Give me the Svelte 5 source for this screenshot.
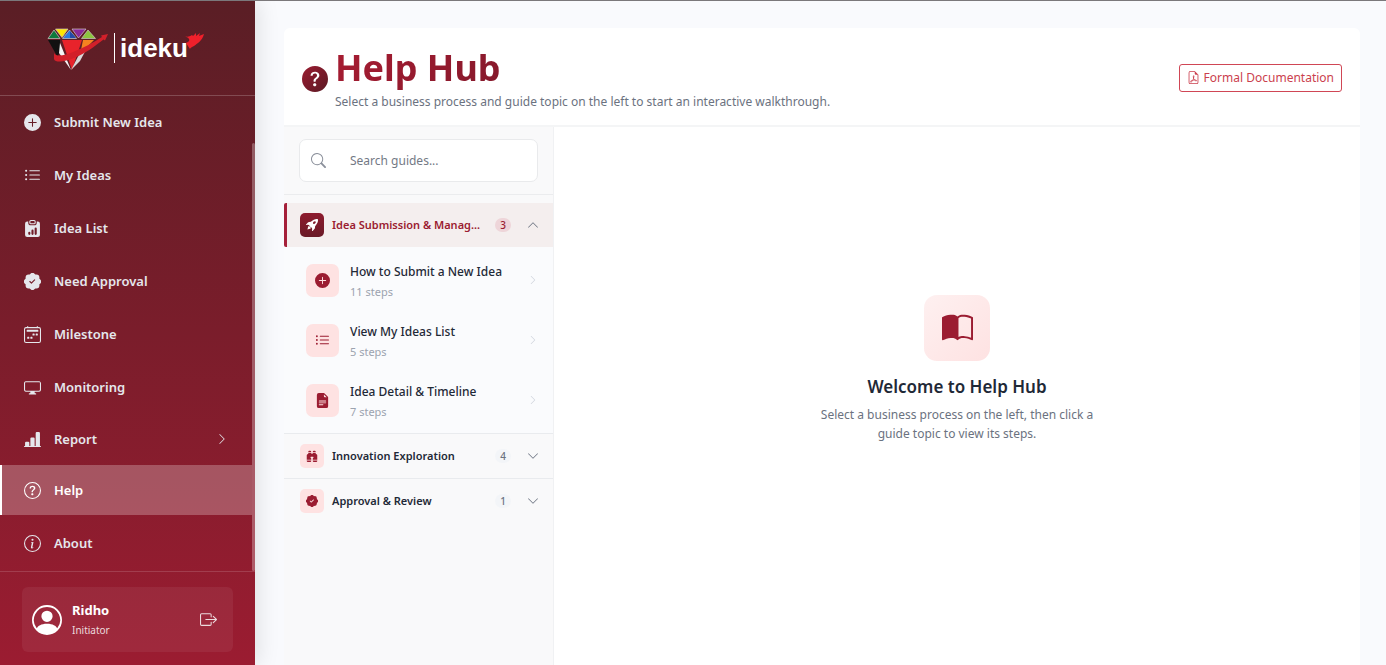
<script>
  const icons = {
    plus: 'M16 8A8 8 0 1 1 0 8a8 8 0 0 1 16 0M8.5 4.5a.5.5 0 0 0-1 0v3h-3a.5.5 0 0 0 0 1h3v3a.5.5 0 0 0 1 0v-3h3a.5.5 0 0 0 0-1h-3z',
    list: 'M5 11.5a.5.5 0 0 1 .5-.5h9a.5.5 0 0 1 0 1h-9a.5.5 0 0 1-.5-.5m0-4a.5.5 0 0 1 .5-.5h9a.5.5 0 0 1 0 1h-9a.5.5 0 0 1-.5-.5m0-4a.5.5 0 0 1 .5-.5h9a.5.5 0 0 1 0 1h-9a.5.5 0 0 1-.5-.5m-3 1a1 1 0 1 0 0-2 1 1 0 0 0 0 2m0 4a1 1 0 1 0 0-2 1 1 0 0 0 0 2m0 4a1 1 0 1 0 0-2 1 1 0 0 0 0 2',
    clipboard: 'M6.5 0A1.5 1.5 0 0 0 5 1.5v1A1.5 1.5 0 0 0 6.5 4h3A1.5 1.5 0 0 0 11 2.5v-1A1.5 1.5 0 0 0 9.5 0zm3 1a.5.5 0 0 1 .5.5v1a.5.5 0 0 1-.5.5h-3a.5.5 0 0 1-.5-.5v-1a.5.5 0 0 1 .5-.5zM4 1.5H3a2 2 0 0 0-2 2V14a2 2 0 0 0 2 2h10a2 2 0 0 0 2-2V3.5a2 2 0 0 0-2-2h-1v1A2.5 2.5 0 0 1 9.5 5h-3A2.5 2.5 0 0 1 4 2.5zM10 8a1 1 0 1 1 2 0v5a1 1 0 1 1-2 0zm-6 4a1 1 0 1 1 2 0v1a1 1 0 1 1-2 0zm4-3a1 1 0 0 1 1 1v3a1 1 0 1 1-2 0v-3a1 1 0 0 1 1-1',
    patch: 'M10.067.87a2.89 2.89 0 0 0-4.134 0l-.622.638-.89-.011a2.89 2.89 0 0 0-2.924 2.924l.01.89-.636.622a2.89 2.89 0 0 0 0 4.134l.637.622-.011.89a2.89 2.89 0 0 0 2.924 2.924l.89-.01.622.636a2.89 2.89 0 0 0 4.134 0l.622-.637.89.011a2.89 2.89 0 0 0 2.924-2.924l-.01-.89.636-.622a2.89 2.89 0 0 0 0-4.134l-.637-.622.011-.89a2.89 2.89 0 0 0-2.924-2.924l-.89.01zm.287 5.984-3 3a.5.5 0 0 1-.708 0l-1.5-1.5a.5.5 0 1 1 .708-.708L7 8.793l2.646-2.647a.5.5 0 0 1 .708.708',
    calendar: 'M3.5 0a.5.5 0 0 1 .5.5V1h8V.5a.5.5 0 0 1 1 0V1h1a2 2 0 0 1 2 2v11a2 2 0 0 1-2 2H2a2 2 0 0 1-2-2V3a2 2 0 0 1 2-2h1V.5a.5.5 0 0 1 .5-.5M2 2a1 1 0 0 0-1 1v11a1 1 0 0 0 1 1h12a1 1 0 0 0 1-1V3a1 1 0 0 0-1-1zM2.5 4a.5.5 0 0 1 .5-.5h10a.5.5 0 0 1 .5.5v1a.5.5 0 0 1-.5.5H3a.5.5 0 0 1-.5-.5zM11 7.5a.5.5 0 0 1 .5-.5h1a.5.5 0 0 1 .5.5v1a.5.5 0 0 1-.5.5h-1a.5.5 0 0 1-.5-.5zm-3 0a.5.5 0 0 1 .5-.5h1a.5.5 0 0 1 .5.5v1a.5.5 0 0 1-.5.5h-1a.5.5 0 0 1-.5-.5zm-5 3a.5.5 0 0 1 .5-.5h1a.5.5 0 0 1 .5.5v1a.5.5 0 0 1-.5.5h-1a.5.5 0 0 1-.5-.5zm3 0a.5.5 0 0 1 .5-.5h1a.5.5 0 0 1 .5.5v1a.5.5 0 0 1-.5.5h-1a.5.5 0 0 1-.5-.5z',
    display: 'M0 4s0-2 2-2h12s2 0 2 2v6s0 2-2 2h-4q0 1 .25 1.5H11a.5.5 0 0 1 0 1H5a.5.5 0 0 1 0-1h.75Q6 13 6 12H2s-2 0-2-2zm1.398-.855a.76.76 0 0 0-.254.302A1.5 1.5 0 0 0 1 4.01V10c0 .325.078.502.145.602q.105.156.302.254a1.5 1.5 0 0 0 .538.143L2.01 11H14c.325 0 .502-.078.602-.145a.76.76 0 0 0 .254-.302 1.5 1.5 0 0 0 .143-.538L15 9.99V4c0-.325-.078-.502-.145-.602a.76.76 0 0 0-.302-.254A1.5 1.5 0 0 0 13.99 3H2c-.325 0-.502.078-.602.145',
    chart: 'M11 2a1 1 0 0 1 1-1h2a1 1 0 0 1 1 1v12h.5a.5.5 0 0 1 0 1H.5a.5.5 0 0 1 0-1H1v-3a1 1 0 0 1 1-1h2a1 1 0 0 1 1 1v3h1V7a1 1 0 0 1 1-1h2a1 1 0 0 1 1 1v7h1z',
    question: 'M8 15A7 7 0 1 1 8 1a7 7 0 0 1 0 14m0 1A8 8 0 1 0 8 0a8 8 0 0 0 0 16M5.255 5.786a.237.237 0 0 0 .241.247h.825c.138 0 .248-.113.266-.25.09-.656.54-1.134 1.342-1.134.686 0 1.314.343 1.314 1.168 0 .635-.374.927-.965 1.371-.673.489-1.206 1.06-1.168 1.987l.003.217a.25.25 0 0 0 .25.246h.811a.25.25 0 0 0 .25-.25v-.105c0-.718.273-.927 1.01-1.486.609-.463 1.244-.977 1.244-2.056 0-1.511-1.276-2.241-2.673-2.241-1.267 0-2.655.59-2.75 2.286m1.557 5.763c0 .533.425.927 1.01.927.609 0 1.028-.394 1.028-.927 0-.552-.42-.94-1.029-.94-.584 0-1.009.388-1.009.94',
    questionFill: 'M16 8A8 8 0 1 1 0 8a8 8 0 0 1 16 0M5.496 6.033h.825c.138 0 .248-.113.266-.25.09-.656.54-1.134 1.342-1.134.686 0 1.314.343 1.314 1.168 0 .635-.374.927-.965 1.371-.673.489-1.206 1.06-1.168 1.987l.003.217a.25.25 0 0 0 .25.246h.811a.25.25 0 0 0 .25-.25v-.105c0-.718.273-.927 1.01-1.486.609-.463 1.244-.977 1.244-2.056 0-1.511-1.276-2.241-2.673-2.241-1.267 0-2.655.59-2.75 2.286a.237.237 0 0 0 .241.247m2.325 6.443c.61 0 1.029-.394 1.029-.927 0-.552-.42-.94-1.029-.94-.584 0-1.009.388-1.009.94 0 .533.425.927 1.01.927z',
    info: 'M8 15A7 7 0 1 1 8 1a7 7 0 0 1 0 14m0 1A8 8 0 1 0 8 0a8 8 0 0 0 0 16m.93-9.412-2.29.287-.082.38.45.083c.294.07.352.176.288.469l-.738 3.468c-.194.897.105 1.319.808 1.319.545 0 1.178-.252 1.465-.598l.088-.416c-.2.176-.492.246-.686.246-.275 0-.375-.193-.304-.533zM9 4.5a1 1 0 1 1-2 0 1 1 0 0 1 2 0',
    logout: 'M10 12.5a.5.5 0 0 1-.5.5h-8a.5.5 0 0 1-.5-.5v-9a.5.5 0 0 1 .5-.5h8a.5.5 0 0 1 .5.5v2a.5.5 0 0 0 1 0v-2A1.5 1.5 0 0 0 9.5 2h-8A1.5 1.5 0 0 0 0 3.5v9A1.5 1.5 0 0 0 1.5 14h8a1.5 1.5 0 0 0 1.5-1.5v-2a.5.5 0 0 0-1 0zM15.854 8.354a.5.5 0 0 0 0-.708l-3-3a.5.5 0 0 0-.708.708L14.293 7.5H5.5a.5.5 0 0 0 0 1h8.793l-2.147 2.146a.5.5 0 0 0 .708.708z',
    person: 'M11 6a3 3 0 1 1-6 0 3 3 0 0 1 6 0M0 8a8 8 0 1 1 16 0A8 8 0 0 1 0 8m8-7a7 7 0 0 0-5.468 11.37C3.242 11.226 4.805 10 8 10s4.757 1.225 5.468 2.37A7 7 0 0 0 8 1',
    search: 'M11.742 10.344a6.5 6.5 0 1 0-1.397 1.398h-.001q.044.06.098.115l3.85 3.85a1 1 0 0 0 1.415-1.414l-3.85-3.85a1 1 0 0 0-.115-.1zM12 6.5a5.5 5.5 0 1 1-11 0 5.5 5.5 0 0 1 11 0',
    down: 'M1.646 4.646a.5.5 0 0 1 .708 0L8 10.293l5.646-5.647a.5.5 0 0 1 .708.708l-6 6a.5.5 0 0 1-.708 0l-6-6a.5.5 0 0 1 0-.708',
    up: 'M7.646 4.646a.5.5 0 0 1 .708 0l6 6a.5.5 0 0 1-.708.708L8 5.707l-5.646 5.647a.5.5 0 0 1-.708-.708z',
    right: 'M4.646 1.646a.5.5 0 0 1 .708 0l6 6a.5.5 0 0 1 0 .708l-6 6a.5.5 0 0 1-.708-.708L10.293 8 4.646 2.354a.5.5 0 0 1 0-.708',
    rocket: 'M12.17 9.53c2.307-2.592 3.278-4.684 3.641-6.218.21-.887.214-1.58.16-2.065a3.6 3.6 0 0 0-.108-.563 2 2 0 0 0-.078-.23V.453c-.073-.164-.168-.234-.352-.295a2 2 0 0 0-.16-.045 4 4 0 0 0-.57-.093c-.49-.044-1.19-.03-2.08.188-1.536.374-3.618 1.343-6.161 3.604l-2.4.238h-.006a2.55 2.55 0 0 0-1.524.734L.15 7.17a.512.512 0 0 0 .433.868l1.896-.271c.28-.04.592.013.955.132.232.076.437.16.655.248l.203.083c.196.816.66 1.58 1.275 2.195.613.614 1.376 1.08 2.191 1.277l.082.202c.089.218.173.424.249.657.118.363.172.676.132.956l-.271 1.9a.512.512 0 0 0 .867.433l2.382-2.386c.41-.41.668-.949.732-1.526zm.11-3.699c-.797.8-1.93.961-2.528.362-.598-.6-.436-1.733.361-2.532.798-.799 1.93-.96 2.528-.361s.437 1.732-.36 2.531ZM5.205 10.787a7.6 7.6 0 0 0 1.804 1.352c-1.118 1.007-4.929 2.028-5.054 1.903-.126-.127.737-4.189 1.839-5.18.346.69.837 1.35 1.411 1.925',
    binoculars: 'M4.5 1A1.5 1.5 0 0 0 3 2.5V3h4v-.5A1.5 1.5 0 0 0 5.5 1zM7 4v1h2V4h4v.882a.5.5 0 0 0 .276.447l.895.447A1.5 1.5 0 0 1 15 7.118V13H9v-1.5a.5.5 0 0 1 .146-.354l.854-.853V9.5a.5.5 0 0 0-.5-.5h-3a.5.5 0 0 0-.5.5v.793l.854.853A.5.5 0 0 1 7 11.5V13H1V7.118a1.5 1.5 0 0 1 .83-1.342l.894-.447A.5.5 0 0 0 3 4.882V4zM1 14v.5A1.5 1.5 0 0 0 2.5 16h3A1.5 1.5 0 0 0 7 14.5V14zm8 0v.5a1.5 1.5 0 0 0 1.5 1.5h3a1.5 1.5 0 0 0 1.5-1.5V14zm4-11H9v-.5A1.5 1.5 0 0 1 10.5 1h1A1.5 1.5 0 0 1 13 2.5z',
    file: 'M9.293 0H4a2 2 0 0 0-2 2v12a2 2 0 0 0 2 2h8a2 2 0 0 0 2-2V4.707A1 1 0 0 0 13.707 4L10 .293A1 1 0 0 0 9.293 0M9.5 3.5v-2l3 3h-2a1 1 0 0 1-1-1M4.5 9a.5.5 0 0 1 0-1h7a.5.5 0 0 1 0 1zM4 10.5a.5.5 0 0 1 .5-.5h7a.5.5 0 0 1 0 1h-7a.5.5 0 0 1-.5-.5m.5 2.5a.5.5 0 0 1 0-1h4a.5.5 0 0 1 0 1z',
    book: 'M8.5 2.687c.654-.689 1.782-.886 3.112-.752 1.234.124 2.503.523 3.388.893v9.923c-.918-.35-2.107-.692-3.287-.81-1.094-.111-2.278-.039-3.213.492zM8 1.783C7.015.936 5.587.81 4.287.94c-1.514.153-3.042.672-3.994 1.105A.5.5 0 0 0 0 2.5v11a.5.5 0 0 0 .707.455c.882-.4 2.303-.881 3.68-1.02 1.409-.142 2.59.087 3.223.877a.5.5 0 0 0 .78 0c.633-.79 1.814-1.019 3.222-.877 1.378.139 2.8.62 3.681 1.02A.5.5 0 0 0 16 13.5v-11a.5.5 0 0 0-.293-.455c-.952-.433-2.48-.952-3.994-1.105C10.413.809 8.985.936 8 1.783',
    pdf: 'M14 14V4.5L9.5 0H4a2 2 0 0 0-2 2v12a2 2 0 0 0 2 2h8a2 2 0 0 0 2-2M9.5 3A1.5 1.5 0 0 0 11 4.5h2V14a1 1 0 0 1-1 1H4a1 1 0 0 1-1-1V2a1 1 0 0 1 1-1h5.5zM4.603 14.087a.8.8 0 0 1-.438-.42c-.195-.388-.13-.776.08-1.102.198-.307.526-.568.897-.787a7.7 7.7 0 0 1 1.482-.645 20 20 0 0 0 1.062-2.227 7.3 7.3 0 0 1-.43-1.295c-.086-.4-.119-.796-.046-1.136.075-.354.274-.672.65-.823.192-.077.4-.12.602-.077a.7.7 0 0 1 .477.365c.088.164.12.356.127.538.007.188-.012.396-.047.614-.084.51-.27 1.134-.52 1.794a11 11 0 0 0 .98 1.686 5.8 5.8 0 0 1 1.334.05c.364.066.734.195.96.465.12.144.193.32.2.518.007.192-.047.382-.138.563a1.04 1.04 0 0 1-.354.416.86.86 0 0 1-.51.138c-.331-.014-.654-.196-.933-.417a5.7 5.7 0 0 1-.911-.95 11.7 11.7 0 0 0-1.997.406 11.3 11.3 0 0 1-1.02 1.51c-.292.35-.609.656-.927.787a.8.8 0 0 1-.58.029m1.379-1.901q-.25.115-.459.238c-.328.194-.541.383-.647.547-.094.145-.096.25-.04.361q.016.032.026.044l.035-.012c.137-.056.355-.235.635-.572a8 8 0 0 0 .45-.606m1.64-1.33a13 13 0 0 1 1.01-.193 12 12 0 0 1-.51-.858 21 21 0 0 1-.5 1.05zm2.446.45q.226.245.435.41c.24.19.407.253.498.256a.1.1 0 0 0 .07-.015.3.3 0 0 0 .094-.125.44.44 0 0 0 .059-.2.1.1 0 0 0-.026-.063c-.052-.062-.2-.152-.518-.209a4 4 0 0 0-.612-.053zM8.078 7.8a7 7 0 0 0 .2-.828q.046-.282.038-.465a.6.6 0 0 0-.032-.198.5.5 0 0 0-.145.04c-.087.035-.158.106-.196.283-.04.192-.03.469.046.822q.036.167.09.346z'
  };

  const nav = [
    { label: 'Submit New Idea', icon: 'plus' },
    { label: 'My Ideas', icon: 'list' },
    { label: 'Idea List', icon: 'clipboard' },
    { label: 'Need Approval', icon: 'patch' },
    { label: 'Milestone', icon: 'calendar' },
    { label: 'Monitoring', icon: 'display' },
    { label: 'Report', icon: 'chart', expandable: true },
    { label: 'Help', icon: 'question', active: true },
    { label: 'About', icon: 'info' }
  ];

  const groups = [
    {
      title: 'Idea Submission & Manag...',
      icon: 'rocket',
      count: 3,
      guides: [
        { title: 'How to Submit a New Idea', steps: 11, icon: 'plus' },
        { title: 'View My Ideas List', steps: 5, icon: 'list' },
        { title: 'Idea Detail & Timeline', steps: 7, icon: 'file' }
      ]
    },
    { title: 'Innovation Exploration', icon: 'binoculars', count: 4, guides: [] },
    { title: 'Approval & Review', icon: 'patch', count: 1, guides: [] }
  ];

  let open = $state(0);
  let query = $state('');
</script>

{#snippet icon(name, size)}
  <svg class="icon" width={size} height={size} viewBox="0 0 16 16" fill="currentColor" fill-rule={name === 'person' ? 'evenodd' : 'nonzero'} aria-hidden="true">
    <path d={icons[name]} />
  </svg>
{/snippet}

<div class="page">
  <aside class="sidebar">
    <a class="brand" href="#home">
      <svg width="62" height="44" viewBox="0 0 62 44" aria-hidden="true">
        <path fill="#111" d="M1 14h12v13l-3 3z" />
        <path fill="#f5f5f5" d="M13 17l11 27-12-17z" />
        <path fill="#e8232b" d="M15 14h20L25 44z" />
        <path fill="#d9d9d9" d="M34 25l6-3-7 13-9 9z" />
        <path fill="#f58220" d="M36 14h11l-7 7-6 3z" />
        <g stroke="#cfc4c4" stroke-width="0.7" stroke-linejoin="round">
          <path fill="#0d7a3c" d="M7 4l6 8.500H1z" />
          <path fill="#ffe600" d="M8.500 3H21l-6 8.500z" />
          <path fill="#2a7de1" d="M22.500 4l7 8.500h-14z" />
          <path fill="#2449a8" d="M23 5l6 7h-6z" stroke="none" />
          <path fill="#8a2a9b" d="M25 3h14l-7.500 9z" />
          <path fill="#8cc63f" d="M41 4l7.500 8.500H34.500z" />
        </g>
        <path fill="#d2202a" d="M7 27c2 4 10 3 19-1 10-4 20-9 29-15l-1-1.500 7-1.500-3 6.500-1.500-1C48 20 38 28 27 32c-9 4-19 5-20 1z" />
      </svg>
      <span class="divider"></span>
      <span class="word">ideku</span>
      <svg class="flame" width="20" height="18" viewBox="0 0 20 18" aria-hidden="true">
        <path fill="#f0202b" d="M0 4c3 1 5 1 8-1l1 1 3-3v3l4-3-1 3 5-2c-2 7-6 9-10 12-2 1-4 2-4 3L2 11c2-1 4-2 3-4C4 5 2 5 0 4z" />
      </svg>
    </a>

    <nav aria-label="Main">
      <ul>
        {#each nav as item}
          <li class:tight={item.expandable}>
            <a href="#{item.label}" class:active={item.active} aria-current={item.active ? 'page' : undefined}>
              {@render icon(item.icon, 17)}
              <span>{item.label}</span>
              {#if item.expandable}<span class="caret">{@render icon('right', 12)}</span>{/if}
            </a>
          </li>
        {/each}
      </ul>
      <div class="track"></div>
    </nav>

    <div class="account">
      <div class="user">
        {@render icon('person', 30)}
        <div class="who">
          <strong>Ridho</strong>
          <span>Initiator</span>
        </div>
        <button class="logout" aria-label="Log out">{@render icon('logout', 17)}</button>
      </div>
    </div>
  </aside>

  <main>
    <section class="card">
      <header>
        <span class="badge-icon">
          <svg width="26" height="26" viewBox="0 0 16 16" aria-hidden="true">
            <defs>
              <linearGradient id="wine" x1="0" y1="0" x2="1" y2="1">
                <stop offset="0" stop-color="#9b1c31" />
                <stop offset="1" stop-color="#5a1a24" />
              </linearGradient>
            </defs>
            <path fill="url(#wine)" d={icons.questionFill} />
          </svg>
        </span>
        <div class="heading">
          <h1>Help Hub</h1>
          <p>Select a business process and guide topic on the left to start an interactive walkthrough.</p>
        </div>
        <a class="doc" href="#docs">{@render icon('pdf', 13)}<span>Formal Documentation</span></a>
      </header>

      <div class="body">
        <div class="guides">
          <div class="search-wrap">
            <label class="search">
              {@render icon('search', 15)}
              <input type="search" placeholder="Search guides..." aria-label="Search guides" bind:value={query} />
            </label>
          </div>

          {#each groups as group, i}
            <div class="group">
              <button class="group-head" class:open={open === i} aria-expanded={open === i} onclick={() => (open = open === i ? -1 : i)}>
                <span class="tile">{@render icon(group.icon, 12)}</span>
                <span class="name">{group.title}</span>
                <span class="count">{group.count}</span>
                {@render icon(open === i ? 'up' : 'down', 12)}
              </button>
              {#if open === i && group.guides.length}
                <div class="topics">
                  {#each group.guides as guide}
                    <button class="topic">
                      <span class="tile big">{@render icon(guide.icon, 15)}</span>
                      <span class="topic-text">
                        <span class="topic-title">{guide.title}</span>
                        <span class="steps">{guide.steps} steps</span>
                      </span>
                      {@render icon('right', 10)}
                    </button>
                  {/each}
                </div>
              {/if}
            </div>
          {/each}
        </div>

        <div class="welcome">
          <div class="book">{@render icon('book', 31)}</div>
          <h2>Welcome to Help Hub</h2>
          <p>Select a business process on the left, then click a guide topic to view its steps.</p>
        </div>
      </div>
    </section>
  </main>
</div>

<style>
  :global(body) {
    margin: 0;
    font-family: "Noto Sans", "Open Sans", sans-serif;
    color: #1f2937;
  }
  .page, .page * { box-sizing: border-box; }
  .page {
    display: flex;
    height: 100vh;
    overflow: hidden;
    border-top: 1px solid #7b787b;
    background: #f9fafd;
  }
  .icon { flex: none; display: block; }
  a { color: inherit; text-decoration: none; }
  button { font: inherit; color: inherit; border: 0; background: none; padding: 0; cursor: pointer; }

  .sidebar {
    flex: none;
    width: 255px;
    display: flex;
    flex-direction: column;
    background: linear-gradient(180deg, #5a1e25 0%, #9b1c31 100%);
    box-shadow: 4px 0 20px rgba(0, 0, 0, 0.1);
    color: #e5e7ec;
  }
  .brand {
    flex: none;
    height: 95px;
    display: flex;
    align-items: center;
    justify-content: center;
    padding-right: 4px;
    border-bottom: 1px solid rgba(255, 255, 255, 0.2);
  }
  .divider { width: 1px; height: 30px; margin: 0 5px; background: #fff; }
  .word { font: 700 26px/32px "Liberation Sans", Arial, sans-serif; color: #fff; }
  .flame { margin: 0 0 14px -4px; }

  nav { flex: 1; min-height: 0; display: flex; overflow: hidden; }
  ul { flex: 1; list-style: none; margin: 0; padding: 1px 0 0; }
  li { margin-bottom: 3px; }
  li:has(+ .tight) { margin-bottom: 1px; }
  li.tight { margin-bottom: 0; }
  li a {
    display: flex;
    align-items: center;
    gap: 13px;
    height: 50px;
    padding: 0 24px;
    font-size: 13px;
    font-weight: 600;
  }
  li.tight a { height: 52px; }
  li a.active {
    background: rgba(255, 255, 255, 0.25);
    box-shadow: inset 2px 0 #fff;
    color: #fff;
  }
  .caret { margin-left: auto; }
  .track { flex: none; width: 3px; margin-top: 47px; border-radius: 2px; background: rgba(255, 255, 255, 0.28); }

  .account { flex: none; padding: 15px 22px 13px; border-top: 1px solid rgba(255, 255, 255, 0.15); }
  .user {
    display: flex;
    align-items: center;
    gap: 10px;
    height: 65px;
    padding: 0 16px 0 10px;
    border-radius: 6px;
    background: rgba(255, 255, 255, 0.06);
    color: #fff;
  }
  .who { flex: 1; display: flex; flex-direction: column; }
  .who strong { font-size: 13px; line-height: 20px; }
  .who span { font-size: 10px; line-height: 20px; color: #ecdadd; }
  .logout { color: #ecdadd; }

  main { flex: 1; min-width: 0; padding: 27px 26px 0 29px; display: flex; }
  .card { flex: 1; min-width: 0; display: flex; flex-direction: column; background: #fff; border-radius: 6px 6px 0 0; }
  header {
    flex: none;
    display: flex;
    align-items: center;
    height: 99px;
    padding: 2px 18px 0;
    border-bottom: 2px solid #f4f5f6;
  }
  .badge-icon { flex: none; margin-right: 7px; padding-top: 2px; }
  .badge-icon svg { display: block; }
  .heading { flex: 1; min-width: 0; }
  h1 {
    width: fit-content;
    margin: 0;
    font-size: 36px;
    line-height: 48px;
    font-weight: 700;
    background: linear-gradient(135deg, #a81c32, #84192b);
    background-clip: text;
    color: transparent;
  }
  header p { margin: 0; font-size: 12px; line-height: 20px; color: #6b7280; }
  .doc {
    flex: none;
    display: flex;
    align-items: center;
    gap: 4px;
    height: 28px;
    padding: 0 7px;
    border: 1px solid #d04655;
    border-radius: 3px;
    font-size: 12px;
    color: #cb3f4e;
  }

  .body { flex: 1; min-height: 0; display: flex; }
  .guides { flex: none; width: 270px; background: #f9f9fa; border-right: 1px solid #f0f1f3; }
  .search-wrap { padding: 12px 15px; margin-bottom: 8px; border-bottom: 1px solid #ebecee; }
  .search {
    display: flex;
    align-items: center;
    height: 43px;
    padding: 0 11px;
    border: 1px solid #e9eaec;
    border-radius: 7px;
    background: #fff;
    color: #8b909b;
  }
  input {
    flex: 1;
    min-width: 0;
    margin-left: 24px;
    padding: 0;
    border: 0;
    outline: 0;
    background: none;
    font: 400 12px/20px "Noto Sans", "Open Sans", sans-serif;
    color: #1f2937;
  }
  input::placeholder { color: #737985; opacity: 1; }

  .group + .group { border-top: 1px solid #e9ebee; }
  .group-head {
    display: flex;
    align-items: center;
    width: 100%;
    height: 44px;
    padding: 0 14px 0 16px;
    text-align: left;
    color: #6b7280;
  }
  .group-head.open { border-left: 3px solid #a5203a; padding-left: 13px; background: #f4eeee; border-radius: 2px 0 0 2px; }
  .tile {
    flex: none;
    display: grid;
    place-items: center;
    width: 24px;
    height: 24px;
    border-radius: 5px;
    background: #fee2e2;
    color: #9b1c31;
  }
  .open .tile { background: linear-gradient(180deg, #8e1b2e, #6a1a27); color: #fff; }
  .name {
    flex: 1;
    min-width: 0;
    margin: 0 8px;
    white-space: nowrap;
    font-size: 11px;
    line-height: 20px;
    font-weight: 600;
    color: #1f2937;
  }
  .open .name { color: #9b1c31; }
  .count {
    flex: none;
    width: 16px;
    margin-right: 16px;
    border-radius: 7px;
    background: #f3f5f8;
    font-size: 10px;
    line-height: 14px;
    font-weight: 500;
    text-align: center;
  }
  .open .count { background: #eed5d9; color: #9b1c31; }

  .topics { padding: 3px 0; background: #fafbfd; }
  .topic {
    display: flex;
    align-items: center;
    width: 100%;
    height: 60px;
    padding: 0 15px 0 22px;
    text-align: left;
    color: #cfd4dc;
  }
  .tile.big { width: 33px; height: 33px; border-radius: 7px; margin-right: 11px; }
  .topic-text { flex: 1; min-width: 0; display: flex; flex-direction: column; padding-top: 3px; line-height: 20px; }
  .topic-title { font-size: 12px; font-weight: 500; color: #1f2937; white-space: nowrap; }
  .steps { font-size: 11px; color: #9ca3af; }

  .welcome { flex: 1; min-width: 0; display: flex; flex-direction: column; align-items: center; padding: 168px 24px 0; text-align: center; }
  .book {
    display: grid;
    place-items: center;
    width: 66px;
    height: 66px;
    border-radius: 13px;
    background: linear-gradient(135deg, #fef0f0, #fee2e2);
    color: #9b1c31;
  }
  h2 { margin: 13px 0 5px; font-size: 17px; line-height: 26px; font-weight: 600; }
  .welcome p { max-width: 280px; margin: 0; font-size: 12px; line-height: 19px; color: #6b7280; }
</style>
